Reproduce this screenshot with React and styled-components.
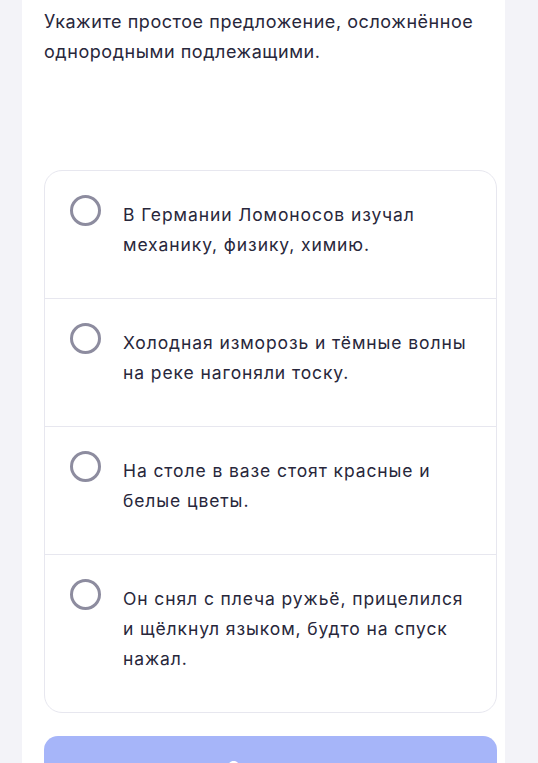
import React from "react";
import styled, { createGlobalStyle } from "styled-components";

const GlobalStyle = createGlobalStyle`
  html, body {
    margin: 0;
    padding: 0;
    background: #f3f3f8;
  }
  body {
    font-family: Inter, "Noto Sans", Roboto, sans-serif;
    -webkit-font-smoothing: antialiased;
  }
  * { box-sizing: border-box; }
`;

const Page = styled.div`
  padding: 0 33px 0 22px;
  min-height: 763px;
`;

const Card = styled.main`
  background: #ffffff;
  padding: 7px 8px 40px 22px;
  min-height: 800px;
`;

const Question = styled.h1`
  margin: 0 0 103px 0;
  font-size: 18px;
  line-height: 30px;
  letter-spacing: 0.55px;
  font-weight: 400;
  color: #28273b;
`;

const Options = styled.div`
  border: 1px solid #e7e7ef;
  border-radius: 18px;
  overflow: hidden;
`;

const Option = styled.label`
  display: flex;
  align-items: flex-start;
  gap: 22px;
  padding: 29px 24px 38px 25px;
  cursor: pointer;
  & + & {
    border-top: 1px solid #e7e7ef;
  }
`;

const Radio = styled.span`
  flex-shrink: 0;
  width: 31px;
  height: 31px;
  margin-top: -5px;
  border: 3px solid #8d8c9f;
  border-radius: 50%;
`;

const OptionText = styled.span`
  font-size: 17.5px;
  line-height: 30px;
  letter-spacing: 0.9px;
  color: #28273b;
`;

const SubmitButton = styled.button`
  display: block;
  width: 100%;
  height: 64px;
  margin-top: 23px;
  border: none;
  border-radius: 14px;
  background: #a6b5f9;
  color: #ffffff;
  font-family: inherit;
  font-size: 17px;
  font-weight: 600;
  letter-spacing: 1px;
`;

const answers = [
  "В Германии Ломоносов изучал механику, физику, химию.",
  "Холодная изморозь и тёмные волны на реке нагоняли тоску.",
  "На столе в вазе стоят красные и белые цветы.",
  "Он снял с плеча ружьё, прицелился и щёлкнул языком, будто на спуск нажал.",
];

export default function App() {
  return (
    <>
      <GlobalStyle />
      <Page>
        <Card>
          <Question>
            Укажите простое предложение, осложнённое однородными подлежащими.
          </Question>
          <Options>
            {answers.map((text) => (
              <Option key={text}>
                <Radio />
                <OptionText>{text}</OptionText>
              </Option>
            ))}
          </Options>
          <SubmitButton>Ответить</SubmitButton>
        </Card>
      </Page>
    </>
  );
}
